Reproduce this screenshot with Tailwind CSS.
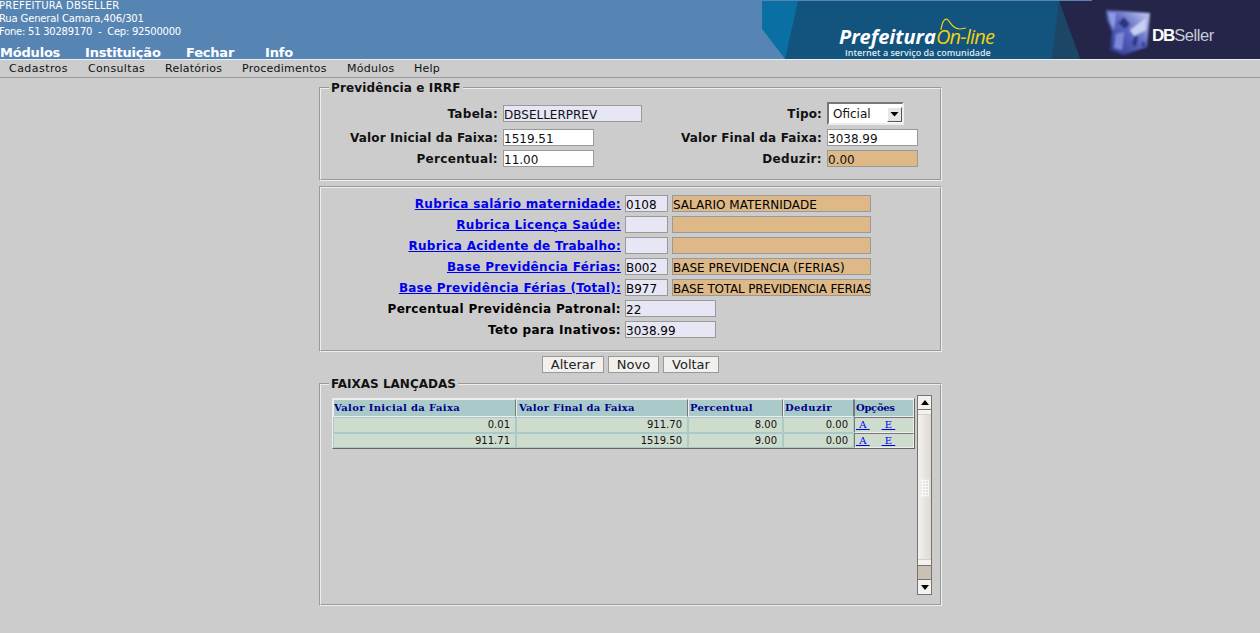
<!DOCTYPE html>
<html>
<head>
<meta charset="utf-8">
<title>Previdência e IRRF</title>
<script src="https://cdn.jsdelivr.net/npm/@tailwindcss/browser@4"></script>
</head>
<body class="bg-[#cccccc] font-['DejaVu_Sans',sans-serif] text-black h-[633px] overflow-hidden">
<header class="relative h-[60px] bg-[#5785b3] border-b border-[#e8eef4] overflow-hidden text-white">
  <div class="text-[10px] leading-[13px] -mt-px">
    <p class="h-[13px] -ml-px tracking-[0.25px]">PREFEITURA DBSELLER</p>
    <p class="h-[13px] -ml-px tracking-[-0.15px]">Rua General Camara,406/301</p>
    <p class="h-[13px] -ml-px tracking-[-0.25px]">Fone: 51 30289170 &nbsp;-&nbsp; Cep: 92500000</p>
  </div>
  <nav class="flex mt-[7px] text-[13px] font-bold leading-[15px] tracking-[-0.2px]">
    <span class="w-[85px]">Módulos</span><span class="w-[101px]">Instituição</span><span class="w-[79px]">Fechar</span><span>Info</span>
  </nav>
  <svg class="absolute right-0 top-0" width="498" height="59" viewBox="762 0 498 59">
    <defs>
      <linearGradient id="cube" x1="0.1" y1="0.9" x2="0.9" y2="0.1"><stop offset="0" stop-color="#2f3d92"/><stop offset=".55" stop-color="#5c69c4"/><stop offset="1" stop-color="#b4bcea"/></linearGradient>
      <filter id="soft" x="-10%" y="-10%" width="120%" height="120%"><feGaussianBlur stdDeviation="0.8"/></filter>
    </defs>
    <rect x="762" y="0" width="498" height="59" fill="#25254a"/>
    <rect x="762" y="0" width="330" height="1" fill="#5785b3"/>
    <polygon points="762,1 1059,1 1080,59 762,59" fill="#13547f"/>
    <polygon points="1059,1 1080,59 1052,59" fill="#1c4566"/>
    <polygon points="762,1 798,1 785,59 762,59" fill="#0a70a3"/>
    <polygon points="762,29 785,59 762,59" fill="#5785b3"/>
    <g filter="url(#soft)">
      <polygon points="1106,10 1150,13 1147,47 1123,55 1110,50 1112,32 1107,20" fill="url(#cube)"/>
      <polygon points="1118,23 1124,17 1130,24 1125,29" fill="#2b3580"/>
      <polygon points="1132,44 1135,35 1138,37 1136,47" fill="#2b3580"/>
      <polygon points="1141,46 1143,41 1146,44 1145,47" fill="#343e8e"/>
      <polygon points="1108,12 1116,13 1114,30 1110,22" fill="#8e9ae2"/>
      <polygon points="1130,30 1146,18 1146,30 1134,36" fill="#c9cff2"/>
      <polygon points="1116,34 1124,32 1122,50 1114,48" fill="#7d89d8"/>
    </g>
    <text x="1152" y="41" font-family="'Liberation Sans',sans-serif" font-weight="700" font-size="17" letter-spacing="-1.2" fill="#fff">DB<tspan font-weight="400" fill="#c9cbd8" letter-spacing="-.4" font-size="16.5">Seller</tspan></text>
    <text x="839" y="44" font-family="'Open Sans',sans-serif" font-weight="700" font-style="italic" font-size="20" fill="#fff">Prefeitura</text>
    <text x="936" y="44" font-family="'Open Sans',sans-serif" font-style="italic" font-size="20" letter-spacing="-.8" fill="#f0d010">On-line</text>
    <path d="M941 30 C942 22 945 17 948 20 C951 24 954 29 960 29 L966 28" fill="none" stroke="#f0d010" stroke-width="1.2"/>
    <text x="845" y="56" font-family="'Open Sans',sans-serif" font-weight="600" font-size="9" fill="#dfe8ef">Internet a serviço da comunidade</text>
  </svg>
</header>
<nav class="h-[18px] flex border-b border-[#999] pl-[9px] text-[11px] leading-[17px] tracking-[0.25px] text-[#111]">
  <span class="w-[79px] tracking-[0.45px]">Cadastros</span><span class="w-[77px] tracking-[0.35px]">Consultas</span><span class="w-[77px]">Relatórios</span><span class="w-[105px]">Procedimentos</span><span class="w-[67px]">Módulos</span><span>Help</span>
</nav>
<main class="w-[623px] ml-[319px] mt-[3px]">
  <fieldset class="h-[100px] border-2 [border-style:groove] border-[#eeeeee] px-[8px]">
    <legend class="text-[12px] font-bold leading-[14px] px-[2px] text-[#111] tracking-[0.14px]">Previdência e IRRF</legend>
    <div class="text-[12px] font-bold text-[#111] pt-[7px]">
      <div class="flex h-[23px] items-center">
        <label class="w-[169px] text-right tracking-[0.3px]">Tabela:</label>
        <input readonly value="DBSELLERPREV" class="ml-[5px] w-[139px] h-[17px] bg-[#e6e6f5] border border-[#999] text-[12px] font-normal pt-[2px] px-0 tracking-normal">
        <label class="w-[180px] text-right tracking-[0.15px]">Tipo:</label>
        <div class="relative ml-[5px] w-[77px] h-[23px]">
          <select class="appearance-none w-full h-full bg-white text-[12px] font-normal border-2 border-t-[#777] border-l-[#777] border-r-[#eee] border-b-[#eee] pl-[4px]"><option>Oficial</option></select>
          <span class="absolute right-[2px] top-[5px] w-[15px] h-[15px] bg-[#e8e6e0] border border-t-white border-l-white border-r-[#555] border-b-[#555] flex items-center justify-center"><svg width="9" height="5" viewBox="0 0 9 5"><polygon points="0.5,0 8.5,0 4.5,4.5" fill="#000"/></svg></span>
        </div>
      </div>
      <div class="flex h-[17px] mt-[4px] items-center">
        <label class="w-[169px] text-right tracking-[0.12px]">Valor Inicial da Faixa:</label>
        <input readonly value="1519.51" class="ml-[5px] w-[91px] h-[17px] bg-white border border-[#999] text-[12px] font-normal pt-[2px] px-0">
        <label class="w-[228px] text-right tracking-[0.16px]">Valor Final da Faixa:</label>
        <input readonly value="3038.99" class="ml-[5px] w-[91px] h-[17px] bg-white border border-[#999] text-[12px] font-normal pt-[2px] px-0">
      </div>
      <div class="flex h-[17px] mt-[4px] items-center">
        <label class="w-[169px] text-right tracking-[0.33px]">Percentual:</label>
        <input readonly value="11.00" class="ml-[5px] w-[91px] h-[17px] bg-white border border-[#999] text-[12px] font-normal pt-[2px] px-0">
        <label class="w-[228px] text-right tracking-[0.34px]">Deduzir:</label>
        <input readonly value="0.00" class="ml-[5px] w-[91px] h-[17px] bg-[#deb887] border border-[#999] text-[12px] font-normal pt-[2px] px-0">
      </div>
    </div>
  </fieldset>
  <section class="mt-[5px] h-[166px] border-2 [border-style:groove] border-[#eeeeee] pt-[5px] text-[12px] font-bold tracking-[0.33px]">
    <div class="flex h-[21px] items-center"><a class="w-[300px] text-right text-[#0000ee] underline">Rubrica salário maternidade:</a><input readonly value="0108" class="ml-[4px] w-[43px] h-[17px] bg-[#e6e6f5] border border-[#999] text-[12px] font-normal pt-[2px] px-0 tracking-normal"><input readonly value="SALARIO MATERNIDADE" class="ml-[4px] w-[199px] h-[17px] bg-[#deb887] border border-[#999] text-[12px] font-normal pt-[2px] px-0 tracking-normal"></div>
    <div class="flex h-[21px] items-center"><a class="w-[300px] text-right text-[#0000ee] underline">Rubrica Licença Saúde:</a><input readonly class="ml-[4px] w-[43px] h-[17px] bg-[#e6e6f5] border border-[#999]"><input readonly class="ml-[4px] w-[199px] h-[17px] bg-[#deb887] border border-[#999]"></div>
    <div class="flex h-[21px] items-center"><a class="w-[300px] text-right text-[#0000ee] underline tracking-[0.3px]">Rubrica Acidente de Trabalho:</a><input readonly class="ml-[4px] w-[43px] h-[17px] bg-[#e6e6f5] border border-[#999]"><input readonly class="ml-[4px] w-[199px] h-[17px] bg-[#deb887] border border-[#999]"></div>
    <div class="flex h-[21px] items-center"><a class="w-[300px] text-right text-[#0000ee] underline">Base Previdência Férias:</a><input readonly value="B002" class="ml-[4px] w-[43px] h-[17px] bg-[#e6e6f5] border border-[#999] text-[12px] font-normal pt-[2px] px-0 tracking-normal"><input readonly value="BASE PREVIDENCIA (FERIAS)" class="ml-[4px] w-[199px] h-[17px] bg-[#deb887] border border-[#999] text-[12px] font-normal pt-[2px] px-0 tracking-normal"></div>
    <div class="flex h-[21px] items-center"><a class="w-[300px] text-right text-[#0000ee] underline tracking-[0.25px]">Base Previdência Férias (Total):</a><input readonly value="B977" class="ml-[4px] w-[43px] h-[17px] bg-[#e6e6f5] border border-[#999] text-[12px] font-normal pt-[2px] px-0 tracking-normal"><input readonly value="BASE TOTAL PREVIDENCIA FERIAS" class="ml-[4px] w-[199px] h-[17px] bg-[#deb887] border border-[#999] text-[12px] font-normal pt-[2px] px-0 tracking-[-0.2px]"></div>
    <div class="flex h-[21px] items-center"><label class="w-[300px] text-right">Percentual Previdência Patronal:</label><input readonly value="22" class="ml-[4px] w-[91px] h-[17px] bg-[#e6e6f5] border border-[#999] text-[12px] font-normal pt-[2px] px-0 tracking-normal"></div>
    <div class="flex h-[21px] items-center"><label class="w-[300px] text-right">Teto para Inativos:</label><input readonly value="3038.99" class="ml-[4px] w-[91px] h-[17px] bg-[#e6e6f5] border border-[#999] text-[12px] font-normal pt-[2px] px-0 tracking-normal"></div>
  </section>
  <div class="mt-[4px] h-[17px] flex pl-[223px] text-[13px] text-[#222] leading-[15px]">
    <button class="w-[62px] h-[17px] bg-[#f2f0ec] border border-[#999]">Alterar</button>
    <button class="ml-[4px] w-[51px] h-[17px] bg-[#f2f0ec] border border-[#999]">Novo</button>
    <button class="ml-[4px] w-[56px] h-[17px] bg-[#f2f0ec] border border-[#999]">Voltar</button>
  </div>
  <fieldset class="mt-[4px] h-[229px] border-2 [border-style:groove] border-[#eeeeee] pl-[8px]">
    <legend class="text-[12px] font-bold leading-[14px] px-[2px] text-[#111]">FAIXAS LANÇADAS</legend>
    <div class="flex ml-[3px]">
      <div class="w-[582px] pt-[7px]">
        <table class="w-[582px] table-fixed border-separate border-spacing-0 bg-[#cddccc] border border-t-[#eee] border-l-[#eee] border-b-[#666] border-r-[#666] text-[10px] leading-[12px] text-[#111]">
          <colgroup><col class="w-[183px]"><col class="w-[172px]"><col class="w-[95px]"><col class="w-[71px]"><col class="w-[60px]"></colgroup>
          <thead>
            <tr class="h-[18px] bg-[#aacaca] text-left font-['DejaVu_Serif',serif] font-bold text-[#00008b]">
              <th class="border border-t-[#eee] border-l-[#eee] border-b-[#eee] border-r-[#777] pl-0 tracking-[0.36px]">Valor Inicial da Faixa</th>
              <th class="border border-t-[#eee] border-l-[#eee] border-b-[#eee] border-r-[#777] pl-[2px] tracking-[0.25px]">Valor Final da Faixa</th>
              <th class="border border-t-[#eee] border-l-[#eee] border-b-[#eee] border-r-[#777] pl-[1px] tracking-[0.2px]">Percentual</th>
              <th class="border border-t-[#eee] border-l-[#eee] border-b-[#eee] border-r-[#777] pl-[1px] tracking-[0.4px]">Deduzir</th>
              <th class="border border-t-[#eee] border-l-[#777] border-b-[#eee] border-r-[#eee] pl-[1px] tracking-[-0.3px]">Opções</th>
            </tr>
          </thead>
          <tbody class="text-right">
            <tr class="h-[16px]">
              <td class="border border-[#aacaca] pr-[5px]">0.01</td><td class="border border-[#aacaca] pr-[5px]">911.70</td><td class="border border-[#aacaca] pr-[5px]">8.00</td><td class="border border-[#aacaca] pr-[5px]">0.00</td>
              <td class="text-left pl-[1px] border border-t-[#777] border-l-[#777] border-r-[#eee] border-b-[#eee] font-['DejaVu_Serif',serif]"><a class="text-[#0000ee] underline whitespace-pre"> A </a><a class="ml-[12px] text-[#0000ee] underline whitespace-pre"> E </a></td>
            </tr>
            <tr class="h-[15px]">
              <td class="border border-[#aacaca] pr-[5px]">911.71</td><td class="border border-[#aacaca] pr-[5px]">1519.50</td><td class="border border-[#aacaca] pr-[5px]">9.00</td><td class="border border-[#aacaca] pr-[5px]">0.00</td>
              <td class="text-left pl-[1px] border border-t-[#777] border-l-[#777] border-r-[#eee] border-b-[#eee] font-['DejaVu_Serif',serif]"><a class="text-[#0000ee] underline whitespace-pre"> A </a><a class="ml-[12px] text-[#0000ee] underline whitespace-pre"> E </a></td>
            </tr>
          </tbody>
        </table>
      </div>
      <div class="ml-[3px] mt-[4px] w-[15px] h-[200px] flex flex-col border border-[#7a726c] bg-[linear-gradient(90deg,#f4f2ef,#ddd9d3)]">
        <div class="h-[14px] bg-[#f4f2ee] border-b border-[#7a726c] flex items-center justify-center"><svg width="8" height="5" viewBox="0 0 8 5"><polygon points="4,0 8,5 0,5" fill="#000"/></svg></div>
        <div class="h-[5px] border-b border-[#d5d0ca] bg-[#f4f2ee]"></div>
        <div class="h-[64px]"></div>
        <div class="h-[18px] flex justify-center"><div class="w-[8px] h-[18px] bg-[radial-gradient(#fff_45%,transparent_50%)] bg-[length:3px_3px]"></div></div>
        <div class="flex-1"></div>
        <div class="h-[6px] border-t border-[#d5d0ca] bg-[#f4f2ee]"></div>
        <div class="h-[15px] bg-[#c9c0b6] border-t border-b border-[#7a726c]"></div>
        <div class="h-[14px] bg-[#f4f2ee] flex items-center justify-center"><svg width="8" height="5" viewBox="0 0 8 5"><polygon points="0,0 8,0 4,5" fill="#000"/></svg></div>
      </div>
    </div>
  </fieldset>
</main>
</body>
</html>
